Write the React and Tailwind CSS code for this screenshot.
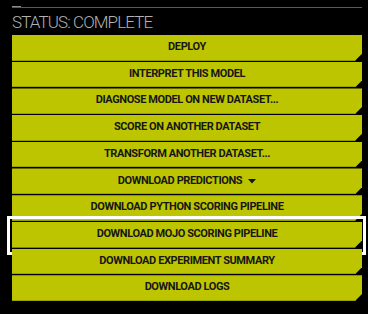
const actions = [
  "Deploy",
  "Interpret this model",
  "Diagnose model on new dataset...",
  "Score on another dataset",
  "Transform another dataset...",
  "Download predictions",
  "Download Python scoring pipeline",
  "Download MOJO scoring pipeline",
  "Download experiment summary",
  "Download logs",
];

const ActionButton = ({ label, caret, selected }) => (
  <div className="relative mb-px">
    <button
      className="w-full h-[25.7px] flex items-center justify-center gap-1.5 bg-[#bdc501] border-b border-[#9aa300] text-[#161616] text-[11px] font-bold uppercase tracking-[-0.4px] [clip-path:polygon(0_0,100%_0,100%_calc(100%-7px),calc(100%-7px)_100%,0_100%)]"
    >
      <span>{label}</span>
      {caret && (
        <svg width="8" height="5" viewBox="0 0 8 5" className="mt-px">
          <path d="M0 0h8L4 4.5z" fill="#161616" />
        </svg>
      )}
    </button>
    {selected && (
      <div className="absolute -top-[6px] -bottom-[7px] -left-[5px] -right-[4px] border-[3px] border-white pointer-events-none" />
    )}
  </div>
);

export default function App() {
  return (
    <div
      className="w-[368px] h-[314px] bg-black overflow-hidden"
      style={{ fontFamily: "Roboto, 'Liberation Sans', sans-serif" }}
    >
      <div className="pl-3 pr-[6px] pt-[6px]">
        <div className="w-[9px] h-px bg-[#8a8a8a]" />
        <div className="h-px bg-[#5a5a5a]" />
        <div className="text-[17px] font-light text-[#b0b0b0] leading-none pt-[6px] pb-[4px] tracking-[-0.9px]">
          STATUS: COMPLETE
        </div>
        <div className="flex flex-col">
          {actions.map((a, i) => (
            <ActionButton
              key={a}
              label={a}
              caret={i === 5}
              selected={i === 7}
            />
          ))}
        </div>
      </div>
    </div>
  );
}
